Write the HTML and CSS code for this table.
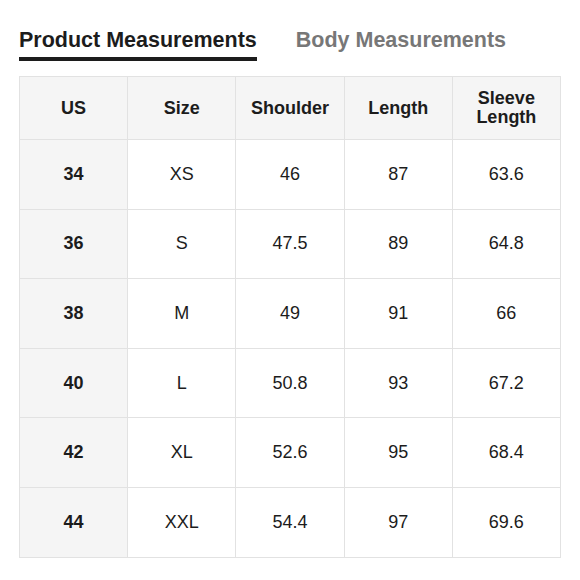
FILE: index.html
```html
<!DOCTYPE html>
<html>
<head>
<meta charset="utf-8">
<link rel="stylesheet" href="styles.css">
</head>
<body>
<div class="page">
  <div class="tabs">
    <div class="tab active">Product Measurements</div>
    <div class="tab">Body Measurements</div>
  </div>
  <table class="size-table">
    <thead>
      <tr><th>US</th><th>Size</th><th>Shoulder</th><th>Length</th><th>Sleeve<br>Length</th></tr>
    </thead>
    <tbody>
      <tr><th>34</th><td>XS</td><td>46</td><td>87</td><td>63.6</td></tr>
      <tr><th>36</th><td>S</td><td>47.5</td><td>89</td><td>64.8</td></tr>
      <tr><th>38</th><td>M</td><td>49</td><td>91</td><td>66</td></tr>
      <tr><th>40</th><td>L</td><td>50.8</td><td>93</td><td>67.2</td></tr>
      <tr><th>42</th><td>XL</td><td>52.6</td><td>95</td><td>68.4</td></tr>
      <tr><th>44</th><td>XXL</td><td>54.4</td><td>97</td><td>69.6</td></tr>
    </tbody>
  </table>
</div>
</body>
</html>
```
FILE: styles.css
```css
html, body {
  margin: 0;
  padding: 0;
  background: #fff;
}
body {
  font-family: "Liberation Sans", Arial, sans-serif;
  color: #1c1c1c;
}
.page {
  padding: 28px 19px 0 19px;
}
.tabs {
  display: flex;
  gap: 39px;
  height: 48px;
}
.tab {
  font-size: 21.5px;
  font-weight: bold;
  color: #777;
  line-height: 24px;
  height: 29px;
}
.tab.active {
  color: #1c1c1c;
  border-bottom: 4px solid #1c1c1c;
}
.size-table {
  width: 542px;
  border-collapse: collapse;
  table-layout: fixed;
}
.size-table th,
.size-table td {
  border: 1px solid #e2e2e2;
  text-align: center;
  vertical-align: middle;
  font-size: 18px;
  padding: 0;
  height: 68.6px;
}
.size-table thead th {
  background: #f5f5f5;
  height: 62px;
  line-height: 19px;
  font-weight: bold;
}
.size-table tbody th {
  background: #f5f5f5;
  font-weight: bold;
}
.size-table td {
  font-weight: normal;
  background: #fff;
}
```
